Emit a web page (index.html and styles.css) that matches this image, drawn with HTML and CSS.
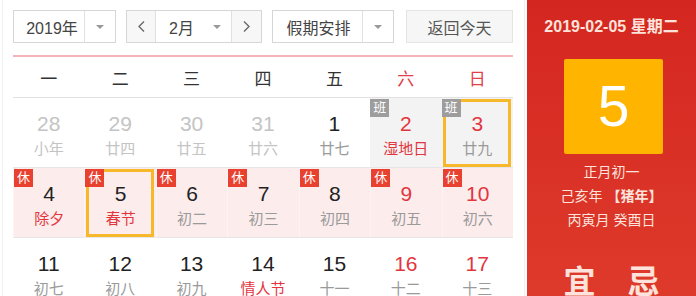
FILE: index.html
```html
<!DOCTYPE html>
<html lang="zh-CN">
<head>
<meta charset="utf-8">
<title>万年历</title>
<link rel="stylesheet" href="styles.css">
</head>
<body>
<div class="page">
  <div class="cal">
    <div class="toolbar">
      <div class="select year">
        <span class="sel-text">2019年</span>
        <span class="sel-arrow"><i class="tri"></i></span>
      </div>
      <div class="month-group">
        <span class="nav-btn"><svg width="7" height="11" viewBox="0 0 7 11"><polyline points="6,0.5 1,5.5 6,10.5" fill="none" stroke="#666" stroke-width="1.3"/></svg></span>
        <span class="month-sel"><span class="m-text">2月</span><i class="tri"></i></span>
        <span class="nav-btn"><svg width="7" height="11" viewBox="0 0 7 11"><polyline points="1,0.5 6,5.5 1,10.5" fill="none" stroke="#666" stroke-width="1.3"/></svg></span>
      </div>
      <div class="select holiday">
        <span class="sel-text">假期安排</span>
        <span class="sel-arrow"><i class="tri"></i></span>
      </div>
      <div class="today-btn">返回今天</div>
    </div>
    <div class="weekhead">
      <span>一</span><span>二</span><span>三</span><span>四</span><span>五</span><span class="we">六</span><span class="we">日</span>
    </div>
    <div class="days">
      <div class="cell other"><div class="num">28</div><div class="lunar">小年</div></div>
      <div class="cell other"><div class="num">29</div><div class="lunar">廿四</div></div>
      <div class="cell other"><div class="num">30</div><div class="lunar">廿五</div></div>
      <div class="cell other"><div class="num">31</div><div class="lunar">廿六</div></div>
      <div class="cell"><div class="num">1</div><div class="lunar">廿七</div></div>
      <div class="cell work red"><span class="badge ban">班</span><div class="num">2</div><div class="lunar fest">湿地日</div></div>
      <div class="cell work red sel"><span class="badge ban">班</span><div class="num">3</div><div class="lunar">廿九</div></div>

      <div class="cell rest"><span class="badge">休</span><div class="num">4</div><div class="lunar fest">除夕</div></div>
      <div class="cell rest sel"><span class="badge">休</span><div class="num">5</div><div class="lunar fest">春节</div></div>
      <div class="cell rest"><span class="badge">休</span><div class="num">6</div><div class="lunar">初二</div></div>
      <div class="cell rest"><span class="badge">休</span><div class="num">7</div><div class="lunar">初三</div></div>
      <div class="cell rest"><span class="badge">休</span><div class="num">8</div><div class="lunar">初四</div></div>
      <div class="cell rest red"><span class="badge">休</span><div class="num">9</div><div class="lunar">初五</div></div>
      <div class="cell rest red"><span class="badge">休</span><div class="num">10</div><div class="lunar">初六</div></div>

      <div class="cell"><div class="num">11</div><div class="lunar">初七</div></div>
      <div class="cell"><div class="num">12</div><div class="lunar">初八</div></div>
      <div class="cell"><div class="num">13</div><div class="lunar">初九</div></div>
      <div class="cell"><div class="num">14</div><div class="lunar fest">情人节</div></div>
      <div class="cell"><div class="num">15</div><div class="lunar">十一</div></div>
      <div class="cell red"><div class="num">16</div><div class="lunar">十二</div></div>
      <div class="cell red"><div class="num">17</div><div class="lunar">十三</div></div>
    </div>
  </div>
  <div class="side">
    <div class="side-date">2019-02-05 星期二</div>
    <div class="big-day">5</div>
    <div class="side-lunar">
      <div>正月初一</div>
      <div>己亥年 <b>【猪年】</b></div>
      <div>丙寅月 癸酉日</div>
    </div>
    <div class="side-sep"></div>
    <div class="yiji"><span>宜</span><span>忌</span></div>
  </div>
</div>
</body>
</html>
```

FILE: styles.css
```css
* { box-sizing: border-box; }
html, body {
  margin: 0;
  padding: 0;
  background: #fff;
  height: 296px;
  overflow: hidden;
}
body {
  font-family: "Liberation Sans", "Noto Sans CJK SC", sans-serif;
  color: #333;
}
.page {
  display: flex;
  height: 296px;
  padding-left: 2px;
}
.cal {
  width: 523px;
  padding: 10px 11px 0 10px;
  border-left: 1px solid #f0f0f0;
  border-right: 1px solid #f0f0f0;
}
.toolbar {
  display: flex;
  height: 33px;
  gap: 10px;
  margin-bottom: 12px;
}
.select {
  display: flex;
  border: 1px solid #d6d6d6;
  background: #fff;
  font-size: 16px;
  color: #444;
}
.select.year { width: 103px; }
.select.holiday { width: 122px; }
.sel-text {
  flex: 1;
  display: flex;
  align-items: center;
  justify-content: center;
  padding-left: 6px;
}
.holiday .sel-text { padding-left: 2px; }
.sel-arrow {
  width: 31px;
  border-left: 1px solid #e2e2e2;
  display: flex;
  align-items: center;
  justify-content: center;
}
.tri {
  display: block;
  width: 0;
  height: 0;
  border-left: 4px solid transparent;
  border-right: 4px solid transparent;
  border-top: 4px solid #999;
}
.month-group {
  display: flex;
  width: 136px;
  border: 1px solid #d6d6d6;
}
.nav-btn {
  width: 29px;
  background: #f7f7f7;
  display: flex;
  align-items: center;
  justify-content: center;
}
.nav-btn:first-child { border-right: 1px solid #e0e0e0; }
.nav-btn:last-child { border-left: 1px solid #e0e0e0; width: 30px; }
.month-sel {
  flex: 1;
  display: flex;
  align-items: center;
  background: #fff;
  font-size: 16px;
  color: #444;
  padding-left: 13px;
}
.month-sel .m-text { flex: 1; }
.month-sel .tri { margin-right: 10px; }
.today-btn {
  margin-left: 2px;
  flex: 1;
  display: flex;
  align-items: center;
  justify-content: center;
  background: #f6f6f6;
  border: 1px solid #e4e4e4;
  font-size: 16px;
  color: #555;
}
.weekhead {
  display: grid;
  grid-template-columns: repeat(7, 1fr);
  border-top: 2px solid #f4b3b8;
  border-bottom: 1px solid #e2e2e2;
  height: 43px;
  align-items: center;
  text-align: center;
  font-size: 17px;
  color: #333;
}
.weekhead .we { color: #e2404a; }
.days {
  display: grid;
  grid-template-columns: repeat(7, 1fr);
  grid-auto-rows: 70px;
}
.cell {
  position: relative;
  text-align: center;
  padding-top: 14px;
  border-bottom: 1px solid #e6e6e6;
}
.num {
  font-size: 21px;
  line-height: 24px;
  color: #222;
}
.lunar {
  font-size: 15px;
  line-height: 20px;
  margin-top: 3px;
  color: #9a9a9a;
}
.cell.other .num, .cell.other .lunar { color: #c4c4c4; }
.cell.red .num { color: #e2363f; }
.lunar.fest { color: #e2363f; }
.cell.work { background: #f3f3f3; }
.cell.rest { background: #fcecec; border-left: 1px solid #fff2f2; }
.cell.sel::after {
  content: "";
  position: absolute;
  top: 1px;
  left: 1px;
  right: 2px;
  bottom: 0;
  border: 3px solid #f7b82b;
}
.badge {
  position: absolute;
  top: 1px;
  left: 0;
  width: 19px;
  height: 18px;
  background: #e8412f;
  color: #fff;
  font-size: 13px;
  line-height: 18px;
  text-align: center;
  z-index: 1;
}
.badge.ban { background: #9d9d9d; }
.side {
  margin-left: 2px;
  flex: 1;
  background: linear-gradient(#d42620, #de3a2b);
  color: #fde3db;
  display: flex;
  flex-direction: column;
  align-items: center;
}
.side-date {
  margin-top: 17px;
  font-size: 16px;
  font-weight: bold;
  line-height: 20px;
}
.big-day {
  margin-top: 22px;
  margin-left: 4px;
  width: 99px;
  height: 95px;
  background: #ffb400;
  border-radius: 2px;
  color: #fff;
  font-size: 57px;
  line-height: 95px;
  text-align: center;
}
.side-lunar {
  margin-top: 6px;
  font-size: 14px;
  line-height: 24px;
  text-align: center;
}
.side-lunar b { font-weight: bold; }
.side-sep {
  align-self: stretch;
  margin: 18px 12px 0 14px;
  height: 1px;
  background: #ea7a70;
}
.yiji {
  display: flex;
  gap: 32px;
  margin-top: 12px;
  font-size: 32px;
  line-height: 40px;
  font-weight: bold;
}
```
